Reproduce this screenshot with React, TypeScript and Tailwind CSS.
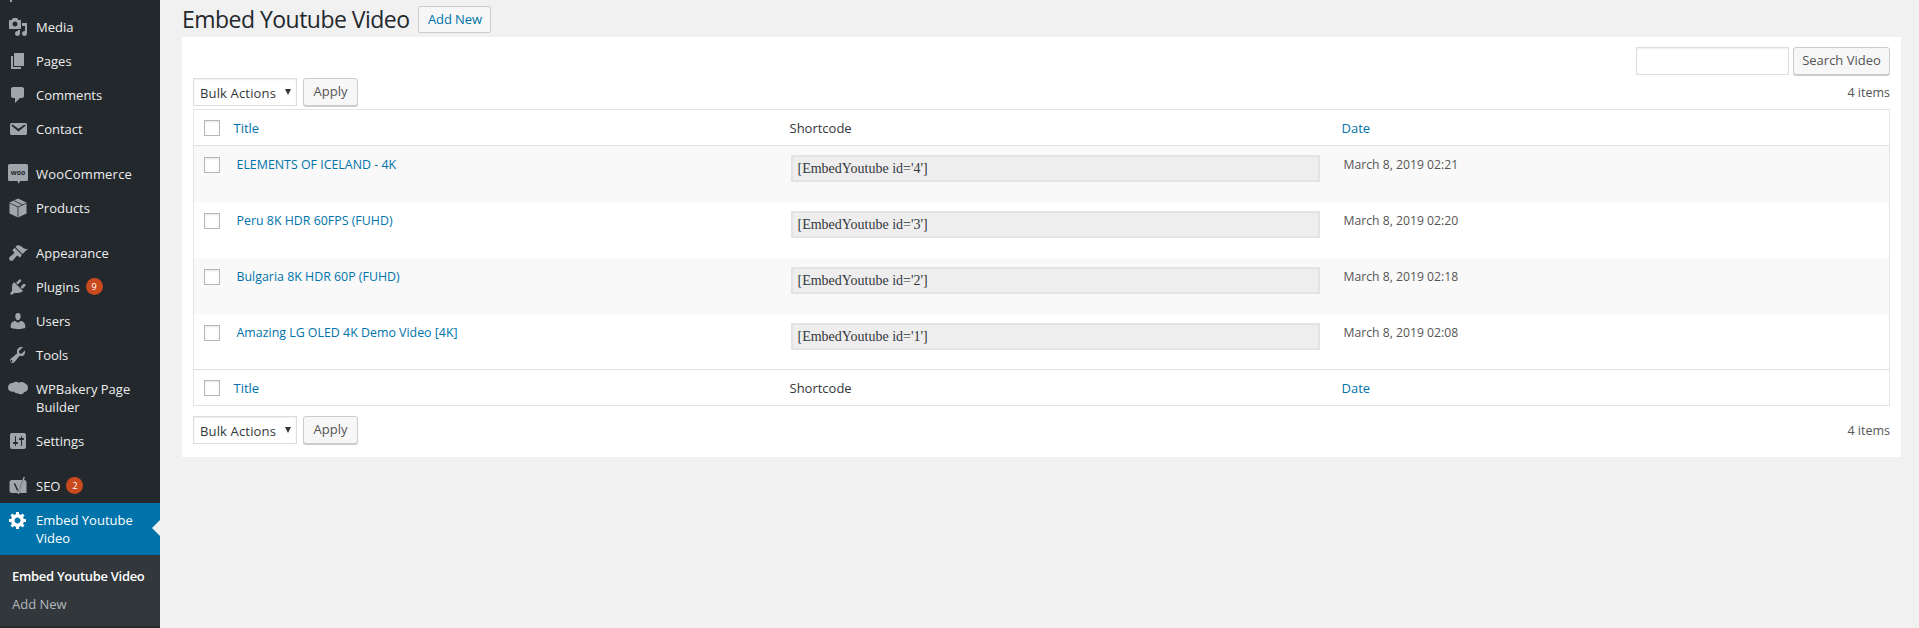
import type { ReactNode } from "react";

const icons = {
  media:
    "M13 11V4c0-.55-.45-1-1-1h-1.670L9 1H5L3.670 3H2c-.55 0-1 .45-1 1v7c0 .55.45 1 1 1h10c.55 0 1-.45 1-1zM7 4.500c1.380 0 2.500 1.120 2.500 2.500S8.380 9.500 7 9.500 4.500 8.380 4.500 7 5.620 4.500 7 4.500zM14 6h5v10.500c0 1.380-1.120 2.500-2.500 2.500S14 17.880 14 16.500s1.120-2.500 2.500-2.500c.17 0 .34.020.5.050V9h-3V6zm-4 8.050V13h2v3.500c0 1.380-1.120 2.500-2.500 2.500S7 17.880 7 16.500 8.120 14 9.500 14c.17 0 .34.020.5.050z",
  pages: "M6 15V2h10v13H6zm-1 1h8v2H3V5h2v11z",
  comments:
    "M5 2h9c1.100 0 2 .9 2 2v7c0 1.100-.9 2-2 2h-2l-5 5v-5H5c-1.100 0-2-.9-2-2V4c0-1.100.9-2 2-2z",
  contact:
    "M3.870 4h13.250C18.370 4 19 4.590 19 5.790v8.420c0 1.190-.63 1.790-1.880 1.790H3.870c-1.250 0-1.880-.6-1.880-1.790V5.790c0-1.200.63-1.790 1.880-1.790zm6.620 8.600l6.740-5.530c.24-.2.430-.66.130-1.070-.29-.41-.82-.42-1.170-.17l-5.700 3.860L4.800 5.830c-.35-.25-.88-.24-1.170.17-.3.41-.11.87.13 1.070z",
  appearance:
    "M14.480 11.060L7.410 3.990l1.500-1.500c.5-.56 2.300-.47 3.510.32 1.210.8 1.430 1.280 2.910 2.100 1.180.64 2.450 1.260 4.670.85zm-.71.710L6.700 4.700 4.930 6.470c-.39.39-.39 1.020 0 1.410l1.060 1.060c.39.39.39 1.030 0 1.420-.6.600-1.430 1.270-2.210 1.910-.78.630-1.620 1.300-1.890 1.570-.93.93-.93 2.420 0 3.330.91.92 2.400.92 3.320 0 .27-.27.93-1.120 1.570-1.900.64-.78 1.310-1.610 1.910-2.210.39-.39 1.030-.39 1.420 0l1.060 1.060c.39.39 1.020.39 1.410 0z",
  plugins:
    "M13.110 4.360L9.870 7.600 8 5.730l3.240-3.240c.35-.34 1.050-.2 1.560.32.52.51.66 1.210.31 1.550zm-8 1.770l.91-1.120 9.010 9.010-1.190.84c-.71.71-2.630 1.160-3.820 1.160H6.140L4.900 17.260c-.59.59-1.540.59-2.120 0-.59-.58-.59-1.530 0-2.120l1.240-1.240v-3.880c0-1.130.4-3.190 1.090-3.890zm7.260 3.970l3.240-3.240c.34-.35 1.040-.21 1.550.31.52.51.66 1.210.31 1.550l-3.240 3.250z",
  users:
    "M10 9.250c-2.270 0-2.730-3.440-2.730-3.440C7 4.020 7.820 2 9.970 2c2.160 0 2.980 2.020 2.710 3.810 0 0-.41 3.440-2.680 3.440zm0 2.570L12.720 10c2.390 0 4.520 2.330 4.520 4.530v2.490s-3.650 1.130-7.240 1.130c-3.650 0-7.240-1.130-7.240-1.130v-2.490c0-2.250 1.940-4.480 4.470-4.480z",
  tools:
    "M16.680 9.770c-1.340 1.340-3.300 1.670-4.950.99l-5.410 6.520c-.99.99-2.590.99-3.570 0-.99-.98-.99-2.580 0-3.570l6.520-5.420c-.68-1.650-.35-3.610.99-4.950 1.280-1.280 3.120-1.640 4.730-1.080L10.900 6.080l.53 2.120 2.120.53 3.300-3.300c.56 1.610.2 3.450-1.080 4.740zM4.170 16.800c.39-.39.39-1.020 0-1.410-.39-.39-1.020-.39-1.410 0-.39.39-.39 1.020 0 1.410.39.39 1.020.39 1.410 0z",
  bakery:
    "M0 8.500C0 5.500 2.500 3.500 5 4c1.500-1.700 4.500-1.800 6-.2 1.500-1.300 4.800-1 6 .7 1.700.5 3 2.200 3 4.300 0 2.500-1.700 4.200-3.800 4.200-.6 1.400-2 2.300-3.700 2.300-1 0-2-.3-2.700-1-1.400.2-2.900-.4-3.500-1.500C2.700 13.200 0 11.300 0 8.500z",
  settings:
    "M18 16V4c0-1.100-.9-2-2-2H4c-1.100 0-2 .9-2 2v12c0 1.100.9 2 2 2h12c1.100 0 2-.9 2-2zM8 11h1c.55 0 1 .45 1 1s-.45 1-1 1H8v1.500c0 .28-.22.5-.5.5s-.5-.22-.5-.5V13H6c-.55 0-1-.45-1-1s.45-1 1-1h1V5.500c0-.28.22-.5.5-.5s.5.22.5.5V11zm5-2h-1c-.55 0-1-.45-1-1s.45-1 1-1h1V5.500c0-.28.22-.5.5-.5s.5.22.5.5V7h1c.55 0 1 .45 1 1s-.45 1-1 1h-1v5.500c0 .28-.22.5-.5.5s-.5-.22-.5-.5V9z",
  gear:
    "M18 12h-2.180c-.17.7-.44 1.350-.81 1.930l1.540 1.540-2.100 2.100-1.540-1.540c-.58.36-1.230.63-1.910.79V19H8v-2.180c-.68-.16-1.330-.43-1.910-.79l-1.540 1.540-2.120-2.120 1.540-1.540c-.36-.58-.63-1.230-.79-1.910H1V9.030h2.170c.16-.7.440-1.350.8-1.940L2.430 5.550l2.100-2.100 1.540 1.540c.58-.37 1.240-.64 1.930-.81V2h3v2.180c.68.16 1.330.43 1.910.79l1.540-1.540 2.120 2.120-1.540 1.540c.36.59.64 1.240.8 1.940H18V12zm-8.500 1.500c1.660 0 3-1.340 3-3s-1.340-3-3-3-3 1.340-3 3 1.340 3 3 3z",
};

function Icon({ d, white }: { d: string; white?: boolean }) {
  return (
    <svg
      viewBox="0 0 20 20"
      className={"w-5 h-5 fill-current " + (white ? "text-white" : "text-[#a0a5aa]")}
    >
      <path d={d} fillRule="evenodd" />
    </svg>
  );
}

function WooIcon() {
  return (
    <svg viewBox="0 0 20 20" className="w-5 h-5">
      <path d="M1.500 0h17A1.500 1.500 0 0 1 20 1.500v14a1.500 1.500 0 0 1-1.500 1.500H12l-1.500 3-1-3h-8A1.500 1.500 0 0 1 0 15.500v-14A1.500 1.500 0 0 1 1.500 0z" fill="#a0a5aa" />
      <text x="10" y="11" textAnchor="middle" fontSize="7" fontWeight="700" fontFamily="'Open Sans', sans-serif" fill="#23282d">
        woo
      </text>
    </svg>
  );
}

function CubeIcon() {
  return (
    <svg viewBox="0 0 20 20" className="w-5 h-5">
      <path d="M10 0.500l8.500 4v11L10 19.500l-8.500-4v-11z" fill="#a0a5aa" />
      <path d="M1.500 5L10 9l8.500-4M10 9v10M6 2.700l8.500 4" fill="none" stroke="#23282d" strokeWidth="0.8" />
    </svg>
  );
}

function YoastIcon() {
  return (
    <svg viewBox="0 0 20 20" className="w-5 h-5">
      <path d="M4 4h12a2.500 2.500 0 0 1 2.500 2.500V17H4a2.500 2.500 0 0 1-2.500-2.500v-8A2.500 2.500 0 0 1 4 4z" fill="#a0a5aa" />
      <path d="M6.500 7.500l3.200 7M16 1l-6 17.500" fill="none" stroke="#23282d" strokeWidth="1.500" />
      <path d="M15.500 1h1.500l-6 17h-1.500z" fill="#a0a5aa" />
    </svg>
  );
}

function MenuItem({
  icon,
  children,
  badge,
  gap,
  wide,
}: {
  icon: ReactNode;
  children: ReactNode;
  badge?: string;
  gap?: boolean;
  wide?: boolean;
}) {
  return (
    <div className={"flex text-[13px] leading-[18px] text-[#eee] " + (gap ? "mt-[11px]" : "")}>
      <div className="w-9 shrink-0 pl-2 pt-[7px]">{icon}</div>
      <div className="py-2 pr-2 flex-1 flex items-start">
        <span className={wide ? "tracking-[0.2px]" : ""}>{children}</span>
        {badge && (
          <span className="ml-[6px] shrink-0 w-[17px] h-[17px] rounded-full bg-[#ca4a1f] text-white text-[9px] leading-[17px] text-center">
            {badge}
          </span>
        )}
      </div>
    </div>
  );
}

function Sidebar() {
  return (
    <aside className="relative w-40 shrink-0 h-full bg-[#23282d] pt-[10px]">
      <div className="absolute left-[10px] top-0 w-[2px] h-[2px] bg-[#a0a5aa]" />
      <MenuItem icon={<Icon d={icons.media} />}>Media</MenuItem>
      <MenuItem icon={<Icon d={icons.pages} />}>Pages</MenuItem>
      <MenuItem icon={<Icon d={icons.comments} />}>Comments</MenuItem>
      <MenuItem icon={<Icon d={icons.contact} />}>Contact</MenuItem>
      <MenuItem gap wide icon={<WooIcon />}>WooCommerce</MenuItem>
      <MenuItem icon={<CubeIcon />}>Products</MenuItem>
      <MenuItem gap icon={<Icon d={icons.appearance} />}>Appearance</MenuItem>
      <MenuItem icon={<Icon d={icons.plugins} />} badge="9">Plugins</MenuItem>
      <MenuItem icon={<Icon d={icons.users} />}>Users</MenuItem>
      <MenuItem icon={<Icon d={icons.tools} />}>Tools</MenuItem>
      <MenuItem icon={<Icon d={icons.bakery} />}>WPBakery Page Builder</MenuItem>
      <MenuItem icon={<Icon d={icons.settings} />}>Settings</MenuItem>
      <MenuItem gap icon={<YoastIcon />} badge="2">SEO</MenuItem>
      <div className="relative bg-[#0073aa] text-white">
        <div className="flex text-[13px] leading-[18px]">
          <div className="w-9 shrink-0 pl-2 pt-[7px]">
            <Icon d={icons.gear} white />
          </div>
          <div className="py-2 pr-2 flex-1">Embed Youtube Video</div>
        </div>
        <div className="absolute right-0 top-[17px] w-0 h-0 border-y-[8px] border-y-transparent border-r-[8px] border-r-[#f1f1f1]" />
      </div>
      <div className="bg-[#32373c] pt-[7px] pb-2 text-[13px] leading-[18px]">
        <div className="px-3 py-[5px] font-semibold text-white whitespace-nowrap tracking-[-0.3px]">Embed Youtube Video</div>
        <div className="px-3 py-[5px] text-[#b4b9be]">Add New</div>
      </div>
    </aside>
  );
}

function WpButton({ children, className }: { children: ReactNode; className?: string }) {
  return (
    <button
      className={
        "h-[28px] rounded-[3px] border border-[#ccc] bg-[#f7f7f7] text-[13px] text-[#555] shadow-[0_1px_0_#ccc] " +
        (className || "")
      }
    >
      {children}
    </button>
  );
}

function CheckBox() {
  return (
    <input
      type="checkbox"
      className="block appearance-none w-4 h-4 border border-[#b4b9be] bg-white shadow-[inset_0_1px_2px_rgba(0,0,0,0.1)]"
    />
  );
}

function BulkBar() {
  return (
    <div className="flex items-center">
      <div className="relative w-[104px] h-[28px]">
        <select className="block appearance-none w-full h-full border border-[#ddd] bg-white pl-[6px] pt-[3px] text-[13px] tracking-[0.15px] text-[#32373c] shadow-[inset_0_1px_2px_rgba(0,0,0,0.07)]">
          <option>Bulk Actions</option>
        </select>
        <svg viewBox="0 0 8 8" className="absolute right-[5px] top-[10px] w-2 h-2 fill-[#32373c]">
          <path d="M1 1h6L4 7z" />
        </svg>
      </div>
      <WpButton className="ml-[6px] w-[55px]">Apply</WpButton>
      <span className="ml-auto pt-[3px] text-[12.500px] text-[#555]">4 items</span>
    </div>
  );
}

const rows = [
  { id: "4", title: "ELEMENTS OF ICELAND - 4K", date: "March 8, 2019 02:21" },
  { id: "3", title: "Peru 8K HDR 60FPS (FUHD)", date: "March 8, 2019 02:20" },
  { id: "2", title: "Bulgaria 8K HDR 60P (FUHD)", date: "March 8, 2019 02:18" },
  { id: "1", title: "Amazing LG OLED 4K Demo Video [4K]", date: "March 8, 2019 02:08" },
];

function HeaderCells() {
  return (
    <>
      <td className="pl-[10px] align-middle"><CheckBox /></td>
      <td className="pl-[10px] pt-[3px] text-[#0073aa] align-middle">Title</td>
      <td className="pl-[10px] pt-[3px] text-[#32373c] align-middle">Shortcode</td>
      <td className="pl-[10px] pt-[3px] text-[#0073aa] align-middle">Date</td>
    </>
  );
}

export default function App() {
  return (
    <div className="flex h-[628px] overflow-hidden bg-[#f1f1f1] font-['Open_Sans',sans-serif]">
      <Sidebar />
      <main className="flex-1 pl-[22px] pr-[19px]">
        <div className="h-[37px] pt-[2px] flex items-center">
          <h1 className="text-[23px] tracking-[-0.53px] text-[#23282d]">Embed Youtube Video</h1>
          <button className="ml-[9px] h-[27px] w-[73px] rounded-[2px] border border-[#ccc] bg-[#f7f7f7] text-[13px] font-medium tracking-[-0.1px] text-[#0073aa]">
            Add New
          </button>
        </div>
        <div className="bg-white px-[11px] pt-[10px] pb-[13px] h-[420px]">
          <div className="flex justify-end h-[28px]">
            <input className="w-[153px] h-[28px] border border-[#ddd] bg-white shadow-[inset_0_1px_2px_rgba(0,0,0,0.07)]" />
            <WpButton className="ml-1 w-[97px]">Search Video</WpButton>
          </div>
          <div className="mt-[3px]">
            <BulkBar />
          </div>
          <table className="mt-[3px] w-[1697px] table-fixed border border-[#e5e5e5] border-collapse text-[13px]">
            <colgroup>
              <col className="w-[30px]" />
              <col className="w-[556px]" />
              <col className="w-[552px]" />
              <col />
            </colgroup>
            <thead>
              <tr className="h-[36px] border-b border-[#e1e1e1]">
                <HeaderCells />
              </tr>
            </thead>
            <tbody>
              {rows.map((r, i) => (
                <tr key={r.id} className={"h-[56px] " + (i % 2 === 0 ? "bg-[#f9f9f9]" : "bg-white")}>
                  <td className="pl-[10px] pt-[11px] align-top"><CheckBox /></td>
                  <td className="pl-[13px] pt-[10px] align-top text-[12.400px] text-[#0073aa] leading-[18px]">{r.title}</td>
                  <td className="pl-[11px] pt-[9px] align-top">
                    <input
                      readOnly
                      value={`[EmbedYoutube id='${r.id}']`}
                      className="block w-[529px] h-[27px] border-2 border-[#e3e3e3] bg-[#eee] px-[5px] pt-px text-[14px] text-[#32373c] font-['Liberation_Serif',serif]"
                    />
                  </td>
                  <td className="pl-[12px] pt-[10px] align-top text-[12.200px] text-[#555] leading-[18px]">{r.date}</td>
                </tr>
              ))}
            </tbody>
            <tfoot>
              <tr className="h-[36px] border-t border-[#e1e1e1]">
                <HeaderCells />
              </tr>
            </tfoot>
          </table>
          <div className="mt-[10px]">
            <BulkBar />
          </div>
        </div>
      </main>
    </div>
  );
}
